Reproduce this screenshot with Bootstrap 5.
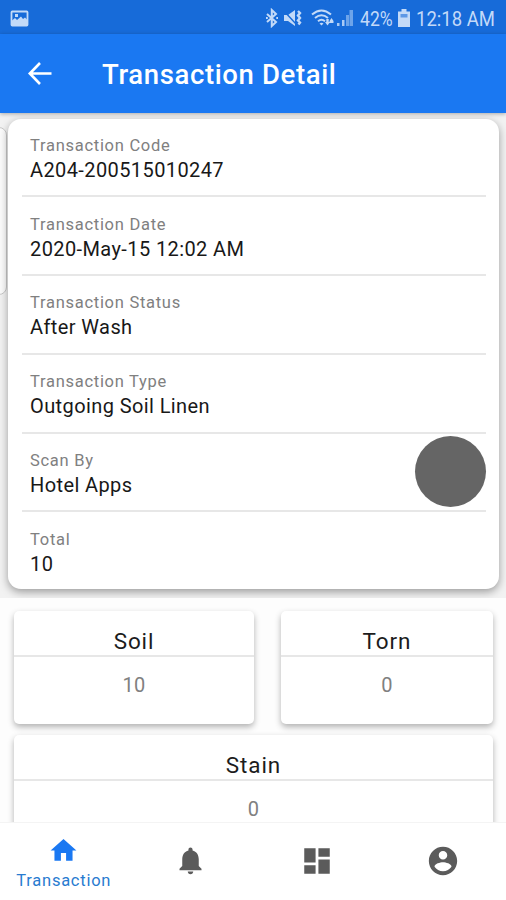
<!DOCTYPE html>
<html lang="en">
<head>
<meta charset="utf-8">
<meta name="viewport" content="width=device-width, initial-scale=1">
<title>Transaction Detail</title>
<link href="https://cdn.jsdelivr.net/npm/bootstrap@5.3.0/dist/css/bootstrap.min.css" rel="stylesheet">
<style>
body{font-family:Roboto,"Liberation Sans",sans-serif;color:#1c1c1c;background:#fdfdfd}
svg{display:block;flex:none}
.screen{height:900px;background:#fdfdfd}
.statusbar{height:34px;background:#176bd9;color:#c3daf8;font-size:20px;line-height:32px;padding:2px 11px 0 10px}
.statusbar span{white-space:nowrap;flex:none;padding-top:1px;transform-origin:0 50%}
.pct{width:33px;margin-left:6px;transform:scaleX(.88)}
.cell{margin-left:5px}
.clock{width:79px;margin-left:6px;transform:scaleX(.925)}
.mute{margin-left:4px}
.signal{margin-left:3px}
.appbar{height:79px;background:#1a78f2;box-shadow:0 1px 4px rgba(0,0,0,.3);z-index:2;padding-left:26px}
.appbar h1{font-size:27.5px;font-weight:500;letter-spacing:.63px;margin:0 0 0 49px;line-height:30px;padding-top:2px}
.content{min-height:0}
.backdrop{height:485px;background:#f2f2f2;padding:6px 7px 0 8px}
.peek{left:-12px;top:14px;width:19px;height:168px;border-radius:8px;background:#fbfbfb;border:1px solid #c8c8c8}
.detail{height:470px;border:0;border-radius:13px;background:#fff;box-shadow:0 3px 8px rgba(0,0,0,.36);padding:0 13px 0 14px}
.entry{height:78.75px;padding:17.3px 8px 0;border:0;border-bottom:2px solid #e7e7e7;background:transparent}
.entry:first-child{height:78.4px;padding-top:16.5px}
.entry:last-child{border-bottom:0}
.entry dt{font-size:16.5px;font-weight:400;line-height:20px;letter-spacing:.72px;color:#808080}
.entry dd{font-size:20px;line-height:24px;letter-spacing:.4px;margin:2px 0 0;color:#181818}
.avatar{width:71px;height:71px;background:#656565;right:13px;top:317.4px}
.tiles{padding:13px 13px 0 14px}
.tile{height:113px;border:0;border-radius:5px;background:#fff;box-shadow:0 3px 6px rgba(0,0,0,.3)}
.tile-head{height:46px;border-bottom:2px solid #e7e7e7;font-size:22.5px;line-height:28px;padding-top:16px;letter-spacing:.9px}
.tile-num{font-size:20px;line-height:24px;margin-top:16px;color:#808080;letter-spacing:.3px}
.soil{width:240px}.torn{width:212px}
.stain{margin-top:11px}
.tabs{height:78px;background:#fff;border-top:1px solid #f4f4f4;z-index:3}
.tab-label{font-size:16.5px;line-height:20px;letter-spacing:.75px;color:#287bd0;margin-top:5px}
.tabs svg{fill:#5b5b5b}
.tabs .home{fill:#1a78f2}
.tabs .col{padding-left:1px}
.plain{padding-bottom:2px}
</style>
<script src="https://cdn.jsdelivr.net/npm/bootstrap@5.3.0/dist/js/bootstrap.bundle.min.js"></script>
</head>
<body>
<div class="screen d-flex flex-column overflow-hidden">
  <div class="statusbar d-flex align-items-center flex-shrink-0">
    <svg width="19" height="17" viewBox="0 0 19 17"><rect x="1.5" y="1.500" width="16" height="14" rx=".8" fill="none" stroke="#c3daf8" stroke-width="1.800"/><path d="M2 10.500l3-2.500 2 2 4-3.500 2 2.500 2-1.500 2.500 2.500v6H2zM5 4h3v3H5z" fill="#c3daf8"/></svg>
    <svg class="ms-auto" width="14" height="20" viewBox="0 0 14 20"><path d="M2 6l9 8-4.200 4V2L11 6l-9 8M1 10h1.800M11.300 10H13" fill="none" stroke="#c3daf8" stroke-width="2"/></svg>
    <svg class="mute" width="20" height="20" viewBox="0 0 20 20"><path d="M1 7h4l7-5v16l-7-5H1z" fill="#c3daf8"/><path d="M1 3l12 13" stroke="#176bd9" stroke-width="1.400"/><path d="M15 3l2 2-2 2.500 2 2.500-2 2.500 2 2-1.500 2" fill="none" stroke="#c3daf8" stroke-width="2.400"/></svg>
    <svg class="ms-2" width="23" height="20" viewBox="0 0 23 20"><path d="M1 6.500q9.500-8 19 0M4 10q6.500-5.500 13 0M7 13.300q3.500-3 7 0" fill="none" stroke="#c3daf8" stroke-width="2"/><path d="M8.500 15.500q2-1.500 4 0l-2 2z" fill="#c3daf8"/><path d="M14 14h1.300v-3h2.400v3H19l-2.500 3.500zM18.500 13L20.500 10l2 3v2h-4z" fill="#c3daf8"/></svg>
    <svg class="signal" width="17" height="20" viewBox="0 0 17 20"><path d="M0 15h2.500v3H0zM5 12h2.500v6H5z" fill="#a9caf5"/><path d="M9 7h3v11H9zM12.500 2H16v16h-3.500z" fill="#6da4ea"/></svg>
    <span class="pct">42%</span>
    <svg class="cell" width="12" height="19" viewBox="0 0 12 19"><path d="M3.500 0h5v2.500H12V18H0V2.500h3.500z" fill="#c3daf8"/><path d="M2.500 5h7v3.500h-7z" fill="#5d98e6"/></svg>
    <span class="clock">12:18 AM</span>
  </div>
  <header class="appbar d-flex align-items-center text-white flex-shrink-0 position-relative">
    <svg width="27" height="27" viewBox="0 0 27 27"><path d="M25.500 13.500H4M14 3L3.800 13.500 14 24" fill="none" stroke="#fff" stroke-width="2.600"/></svg>
    <h1>Transaction Detail</h1>
  </header>
  <main class="content flex-grow-1 overflow-hidden">
    <section class="backdrop position-relative overflow-hidden">
      <div class="peek position-absolute"></div>
      <div class="card detail position-relative">
        <dl class="list-group list-group-flush mb-0">
          <div class="entry"><dt>Transaction Code</dt><dd>A204-200515010247</dd></div>
          <div class="entry"><dt>Transaction Date</dt><dd>2020-May-15 12:02 AM</dd></div>
          <div class="entry"><dt>Transaction Status</dt><dd>After Wash</dd></div>
          <div class="entry"><dt>Transaction Type</dt><dd>Outgoing Soil Linen</dd></div>
          <div class="entry"><dt>Scan By</dt><dd>Hotel Apps</dd></div>
          <div class="entry"><dt>Total</dt><dd>10</dd></div>
        </dl>
        <div class="avatar rounded-circle position-absolute"></div>
      </div>
    </section>
    <section class="tiles text-center">
      <div class="d-flex justify-content-between">
        <div class="card tile soil"><div class="tile-head">Soil</div><div class="tile-num">10</div></div>
        <div class="card tile torn"><div class="tile-head">Torn</div><div class="tile-num">0</div></div>
      </div>
      <div class="card tile stain"><div class="tile-head">Stain</div><div class="tile-num">0</div></div>
    </section>
  </main>
  <nav class="tabs row g-0 flex-shrink-0 position-relative">
    <div class="col d-flex flex-column align-items-center pt-2">
      <svg class="home mt-1" width="31" height="31" viewBox="0 0 24 24"><path d="M10 20v-6h4v6h5v-8h3L12 3 2 12h3v8z"/></svg>
      <span class="tab-label">Transaction</span>
    </div>
    <div class="col plain d-flex justify-content-center align-items-center">
      <svg width="33" height="33" viewBox="0 0 24 24"><path d="M12 22c1.100 0 2-.9 2-2h-4c0 1.100.9 2 2 2zm6-6v-5c0-3.070-1.640-5.640-4.500-6.320V4c0-.83-.67-1.500-1.500-1.500s-1.500.67-1.500 1.500v.68C7.630 5.360 6 7.920 6 11v5l-2 2v1h16v-1z"/></svg>
    </div>
    <div class="col plain d-flex justify-content-center align-items-center">
      <svg width="34" height="34" viewBox="0 0 24 24"><path d="M3 13h8V3H3zm0 8h8v-6H3zm10 0h8V11h-8zm0-18v6h8V3z"/></svg>
    </div>
    <div class="col plain d-flex justify-content-center align-items-center">
      <svg width="34" height="34" viewBox="0 0 24 24"><path d="M12 2C6.480 2 2 6.480 2 12s4.480 10 10 10 10-4.480 10-10S17.520 2 12 2zm0 3c1.660 0 3 1.340 3 3s-1.340 3-3 3-3-1.340-3-3 1.340-3 3-3zm0 14.200c-2.500 0-4.710-1.280-6-3.220.03-1.990 4-3.080 6-3.080 1.990 0 5.970 1.090 6 3.080-1.290 1.940-3.500 3.220-6 3.220z"/></svg>
    </div>
  </nav>
</div>
</body>
</html>
